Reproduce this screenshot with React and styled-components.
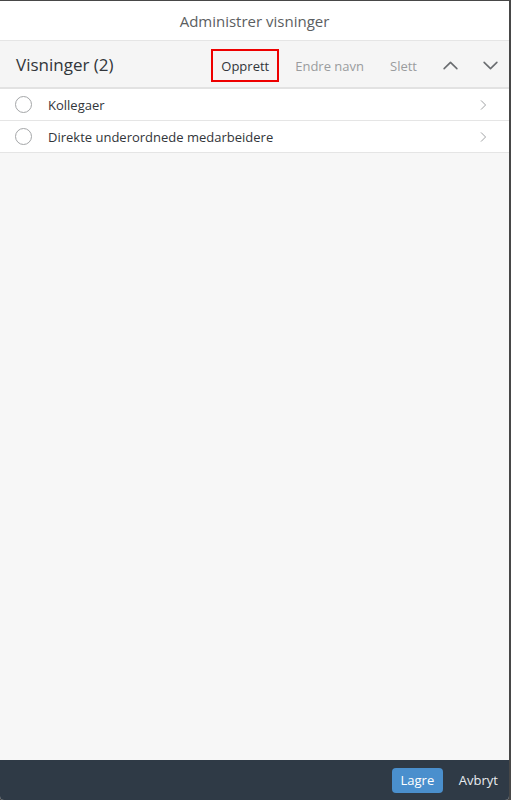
import React from "react";
import styled, { createGlobalStyle } from "styled-components";

const Global = createGlobalStyle`
  html, body { margin: 0; padding: 0; background: #4a4a4a; }
  body { font-family: "Open Sans", "Noto Sans", sans-serif; }
  #root { height: 800px; }
`;

const Frame = styled.div`
  height: 800px;
  box-sizing: border-box;
  padding: 1px 2px 0 0;
  background: #474747;
`;

const Dialog = styled.div`
  height: 799px;
  display: flex;
  flex-direction: column;
  background: #f7f7f7;
  border-radius: 0 0 4px 4px;
  overflow: hidden;
`;

const Header = styled.div`
  height: 39px;
  flex: none;
  display: flex;
  align-items: center;
  justify-content: center;
  background: #fff;
  border-bottom: 1px solid #e5e5e5;
  font-size: 15px;
  color: #5b5e61;
`;

const Toolbar = styled.div`
  height: 46px;
  flex: none;
  display: flex;
  align-items: center;
  gap: 6px;
  padding: 0 2px 0 16px;
  background: #f5f5f5;
  border-bottom: 2px solid #e2e2e2;
`;

const ToolTitle = styled.div`
  font-size: 17px;
  color: #32363a;
  flex: 1;
`;

const ToolButton = styled.button`
  font-family: inherit;
  font-size: 13px;
  background: transparent;
  border: 2px solid ${(p) => (p.$focused ? "#ee0000" : "transparent")};
  color: ${(p) => (p.$disabled ? "#9a9c9e" : "#32363a")};
  height: 33px;
  padding: 0 8px;
  margin-top: 3px;
  display: flex;
  align-items: center;
  cursor: pointer;
`;

const IconButton = styled.button`
  background: transparent;
  border: none;
  width: 34px;
  height: 33px;
  display: flex;
  align-items: center;
  justify-content: center;
  margin-top: 2px;
  padding: 0;
`;

const List = styled.div`
  display: flex;
  flex-direction: column;
`;

const Row = styled.div`
  height: 31px;
  display: flex;
  align-items: center;
  background: #fff;
  border-bottom: 1px solid #e5e5e5;
  padding: 0 20px 0 15px;
`;

const Radio = styled.span`
  width: 17px;
  height: 17px;
  border-radius: 50%;
  border: 1px solid #a4a6a8;
  box-sizing: border-box;
  flex: none;
`;

const RowText = styled.span`
  font-size: 13px;
  color: #32363a;
  margin-left: 16px;
  flex: 1;
`;

const Spacer = styled.div`
  flex: 1;
`;

const Footer = styled.div`
  height: 40px;
  flex: none;
  background: #2f3a46;
  display: flex;
  align-items: center;
  justify-content: flex-end;
  padding: 0 11px 0 0;
  gap: 16px;
`;

const Primary = styled.button`
  font-family: inherit;
  font-size: 13px;
  background: #4a8fcd;
  color: #fff;
  border: none;
  border-radius: 4px;
  height: 25px;
  width: 51px;
  padding: 0;
`;

const Ghost = styled.button`
  font-family: inherit;
  font-size: 13px;
  background: transparent;
  color: #e8ecf0;
  border: none;
  padding: 0;
`;

const Chevron = ({ dir, color = "#6a6d70", size = 14 }) => {
  const d = {
    up: "M2 11 L8 5 L14 11",
    down: "M2 5 L8 11 L14 5",
    right: "M5 2 L10 7 L5 12",
  }[dir];
  const vb = dir === "right" ? "0 0 14 14" : "0 0 16 16";
  return (
    <svg width={size} height={size} viewBox={vb} fill="none">
      <path d={d} stroke={color} strokeWidth={dir === "right" ? 1.1 : 1.5} strokeLinecap="round" strokeLinejoin="round" />
    </svg>
  );
};

const rows = ["Kollegaer", "Direkte underordnede medarbeidere"];

export default function App() {
  return (
    <>
      <Global />
      <Frame>
        <Dialog>
          <Header>Administrer visninger</Header>
          <Toolbar>
            <ToolTitle>Visninger (2)</ToolTitle>
            <ToolButton $focused>Opprett</ToolButton>
            <ToolButton $disabled>Endre navn</ToolButton>
            <ToolButton $disabled>Slett</ToolButton>
            <IconButton><Chevron dir="up" size={17} /></IconButton>
            <IconButton><Chevron dir="down" size={17} /></IconButton>
          </Toolbar>
          <List>
            {rows.map((r) => (
              <Row key={r}>
                <Radio />
                <RowText>{r}</RowText>
                <Chevron dir="right" color="#9a9c9e" size={12} />
              </Row>
            ))}
          </List>
          <Spacer />
          <Footer>
            <Primary>Lagre</Primary>
            <Ghost>Avbryt</Ghost>
          </Footer>
        </Dialog>
      </Frame>
    </>
  );
}
